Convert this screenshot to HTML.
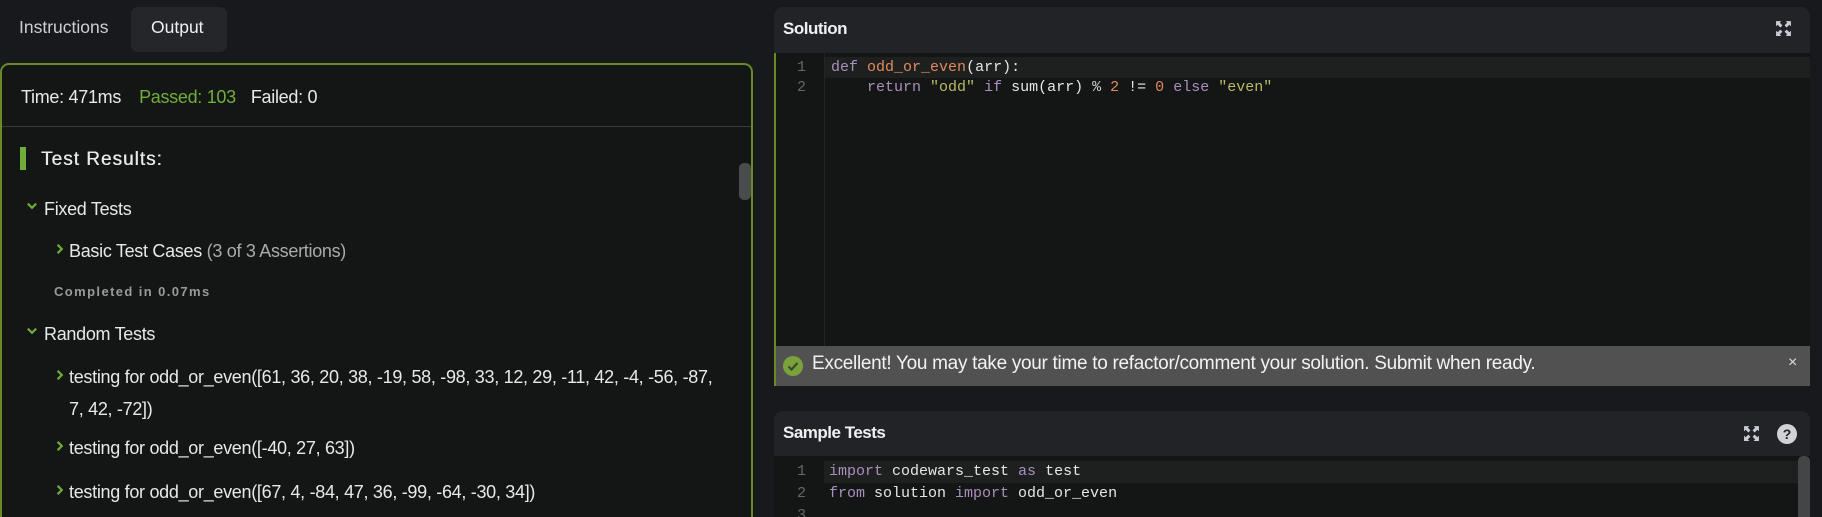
<!DOCTYPE html>
<html style="width:1822px;height:517px;overflow:hidden"><head><meta charset="utf-8"><style>
*{box-sizing:border-box;margin:0;padding:0}
body{width:1822px;height:517px;background:#18191c;font-family:"Liberation Sans",sans-serif;color:#e6e6e6;position:relative;overflow:hidden}
.abs{position:absolute;white-space:nowrap}
.tab{position:absolute;font-size:17.5px;line-height:20px}
#left{position:absolute;left:0;top:63px;width:753px;height:470px;border:2px solid #6a8a26;border-bottom:none;border-radius:9px 9px 0 0;background:#141515;overflow:hidden}
.t{font-size:18px;line-height:20px;color:#e8e8e8;letter-spacing:-.3px}
.mono{font-family:"Liberation Mono",monospace;font-size:15px;line-height:20px;white-space:pre}
.kw{color:#a98fbe}.fn{color:#e08a5c}.st{color:#b8bb62}.nm{color:#e08a5c}.op{color:#cfcfcf}
</style></head><body>
<div style="position:absolute;left:0;top:0;width:1822px;height:517px;overflow:hidden">
<div class="tab" style="left:19px;top:17px;color:#cfcfcf">Instructions</div>
<div style="position:absolute;left:131px;top:7px;width:96px;height:45px;background:#25262a;border-radius:7px"></div>
<div class="tab" style="left:151px;top:17px;color:#f0f0f0">Output</div>

<svg width="0" height="0" style="position:absolute"><defs>
<symbol id="cr" viewBox="0 0 10 10"><path d="M3 1.5l3.5 3.5L3 8.5" stroke="#6fae3a" stroke-width="1.8" fill="none"/></symbol>
<symbol id="cd" viewBox="0 0 10 10"><path d="M1.5 3l3.5 3.5L8.5 3" stroke="#6fae3a" stroke-width="1.8" fill="none"/></symbol>
<symbol id="ex" viewBox="0 0 16 16"><path d="M1 1h5L4.5 2.5 7 5 5 7 2.5 4.5 1 6zM15 1v5L13.5 4.5 11 7 9 5l2.5-2.5L10 1zM1 15v-5l1.5 1.5L5 9l2 2-2.5 2.5L6 15zM15 15h-5l1.5-1.5L9 11l2-2 2.5 2.5L15 10z" fill="#c9ced6"/></symbol>
</defs></svg>

<div id="left">
 <div class="abs t" style="left:19px;top:22px">Time: 471ms<span style="color:#6fae3a;margin-left:18px">Passed: 103</span><span style="margin-left:15px">Failed: 0</span></div>
 <div style="position:absolute;left:0;top:61px;width:100%;height:1px;background:#3a3b3d"></div>
 <div style="position:absolute;left:737px;top:98px;width:12px;height:37px;background:#4a4b4d;border-radius:5px"></div>
 <div style="position:absolute;left:18px;top:82px;width:6px;height:23px;background:#6fae3a"></div>
 <div class="abs t" style="left:39px;top:85px;font-size:19px;letter-spacing:1px;color:#e8e8e8;text-shadow:0.4px 0 0 #e8e8e8">Test Results:</div>
 <svg class="abs" style="left:24px;top:135px" width="12" height="12"><use href="#cd"/></svg>
 <div class="abs t" style="left:42px;top:134px">Fixed Tests</div>
 <svg class="abs" style="left:52px;top:178px" width="12" height="12"><use href="#cr"/></svg>
 <div class="abs t" style="left:67px;top:176px">Basic Test Cases <span style="color:#aaa">(3 of 3 Assertions)</span></div>
 <div class="abs" style="left:52px;top:219px;font-size:13px;font-weight:bold;color:#9a9a9a;letter-spacing:1.4px">Completed in 0.07ms</div>
 <svg class="abs" style="left:24px;top:260px" width="12" height="12"><use href="#cd"/></svg>
 <div class="abs t" style="left:42px;top:259px">Random Tests</div>
 <svg class="abs" style="left:52px;top:304px" width="12" height="12"><use href="#cr"/></svg>
 <div class="abs t" style="left:67px;top:302px">testing for odd_or_even([61, 36, 20, 38, -19, 58, -98, 33, 12, 29, -11, 42, -4, -56, -87,</div>
 <div class="abs t" style="left:67px;top:334px">7, 42, -72])</div>
 <svg class="abs" style="left:52px;top:375px" width="12" height="12"><use href="#cr"/></svg>
 <div class="abs t" style="left:67px;top:373px">testing for odd_or_even([-40, 27, 63])</div>
 <svg class="abs" style="left:52px;top:419px" width="12" height="12"><use href="#cr"/></svg>
 <div class="abs t" style="left:67px;top:417px">testing for odd_or_even([67, 4, -84, 47, 36, -99, -64, -30, 34])</div>
</div>

<div style="position:absolute;left:774px;top:7px;width:1036px;height:46px;background:#222327;border-radius:9px 9px 0 0"></div>
<div class="abs" style="left:783px;top:19px;font-size:17px;font-weight:bold;color:#f0f0f0;letter-spacing:-.5px">Solution</div>
<svg class="abs" style="left:1775px;top:20px" width="17" height="17"><use href="#ex"/></svg>
<div style="position:absolute;left:774px;top:53px;width:1036px;height:293px;background:#141515;border-left:2px solid #6a8a26"></div>
<div style="position:absolute;left:824px;top:57px;width:986px;height:21px;background:#1e1f1f"></div>
<div style="position:absolute;left:824px;top:53px;width:1px;height:293px;background:#232425"></div>
<div class="abs mono" style="left:797px;top:58px;color:#666">1</div>
<div class="abs mono" style="left:797px;top:78px;color:#666">2</div>
<div class="abs mono" style="left:831px;top:58px"><span class="kw">def</span> <span class="fn">odd_or_even</span>(arr):</div>
<div class="abs mono" style="left:831px;top:78px">    <span class="kw">return</span> <span class="st">"odd"</span> <span class="kw">if</span> sum(arr) <span class="op">%</span> <span class="nm">2</span> != <span class="nm">0</span> <span class="kw">else</span> <span class="st">"even"</span></div>

<div style="position:absolute;left:774px;top:346px;width:1036px;height:40px;background:#505150;border-left:2px solid #6a8a26"></div>
<svg class="abs" style="left:783px;top:356px" width="20" height="20" viewBox="0 0 20 20"><circle cx="10" cy="10" r="10" fill="#7aa23c"/><path d="M5.5 10.5l3 3 6-6.5" stroke="#3c4a2a" stroke-width="2.2" fill="none"/></svg>
<div class="abs" style="left:812px;top:353px;font-size:19px;color:#f2f2f2;letter-spacing:-.3px">Excellent! You may take your time to refactor/comment your solution. Submit when ready.</div>
<div class="abs" style="left:1788px;top:354px;font-size:16px;color:#ddd">&#215;</div>

<div style="position:absolute;left:774px;top:411px;width:1036px;height:45px;background:#222327;border-radius:9px 9px 0 0"></div>
<div class="abs" style="left:783px;top:423px;font-size:17px;font-weight:bold;color:#f0f0f0;letter-spacing:-.5px">Sample Tests</div>
<svg class="abs" style="left:1743px;top:425px" width="17" height="17"><use href="#ex"/></svg>
<svg class="abs" style="left:1777px;top:424px" width="20" height="20" viewBox="0 0 20 20"><circle cx="10" cy="10" r="10" fill="#d0d2d6"/><text x="10" y="15" text-anchor="middle" font-family="Liberation Sans" font-weight="bold" font-size="14" fill="#222327">?</text></svg>
<div style="position:absolute;left:774px;top:456px;width:1036px;height:61px;background:#141515"></div>
<div style="position:absolute;left:824px;top:461px;width:974px;height:22px;background:#1e1f1f"></div>
<div style="position:absolute;left:1798px;top:456px;width:12px;height:61px;background:#444547;border-radius:5px 5px 0 0"></div>
<div class="abs mono" style="left:797px;top:462px;color:#666">1</div>
<div class="abs mono" style="left:797px;top:484px;color:#666">2</div>
<div class="abs mono" style="left:797px;top:506px;color:#666">3</div>
<div class="abs mono" style="left:829px;top:462px"><span class="kw">import</span> codewars_test <span class="kw">as</span> test</div>
<div class="abs mono" style="left:829px;top:484px"><span class="kw">from</span> solution <span class="kw">import</span> odd_or_even</div>
</div>
</body></html>
